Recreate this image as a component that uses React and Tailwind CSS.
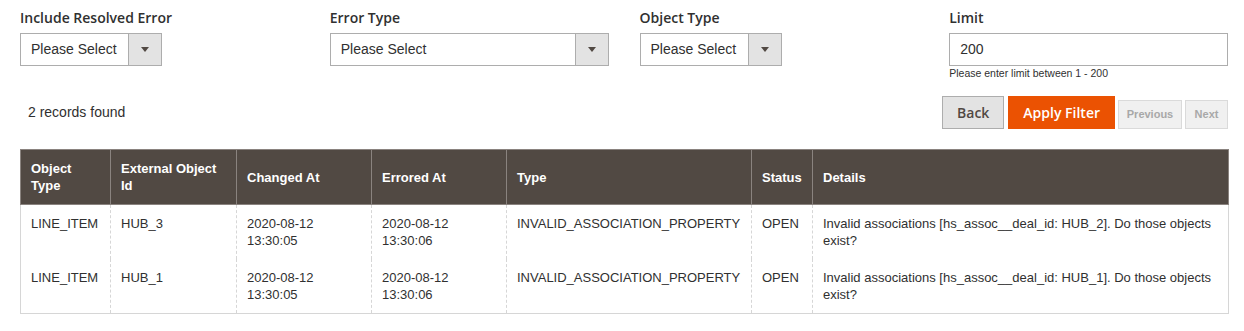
import React from "react";

const rows = [
  {
    objectType: "LINE_ITEM",
    externalId: "HUB_3",
    changedAt: ["2020-08-12", "13:30:05"],
    erroredAt: ["2020-08-12", "13:30:06"],
    type: "INVALID_ASSOCIATION_PROPERTY",
    status: "OPEN",
    details: "Invalid associations [hs_assoc__deal_id: HUB_2]. Do those objects exist?",
  },
  {
    objectType: "LINE_ITEM",
    externalId: "HUB_1",
    changedAt: ["2020-08-12", "13:30:05"],
    erroredAt: ["2020-08-12", "13:30:06"],
    type: "INVALID_ASSOCIATION_PROPERTY",
    status: "OPEN",
    details: "Invalid associations [hs_assoc__deal_id: HUB_1]. Do those objects exist?",
  },
];

const columns = [
  { label: ["Object", "Type"], width: "w-[90px]" },
  { label: ["External Object", "Id"], width: "w-[126px]" },
  { label: ["Changed At"], width: "w-[135px]" },
  { label: ["Errored At"], width: "w-[135px]" },
  { label: ["Type"], width: "w-[245px]" },
  { label: ["Status"], width: "w-[61px]" },
  { label: ["Details"], width: "w-[416px]" },
];

const FieldLabel = ({ children }) => (
  <div className="font-['Open_Sans',sans-serif] font-semibold text-[14px] leading-[20px] text-[#303030] mb-[5px]">
    {children}
  </div>
);

const Select = ({ width }) => (
  <div
    className={`${width} h-[33px] flex border border-[#adadad] bg-white font-['Liberation_Sans',Arial,sans-serif] text-[14px] text-[#303030]`}
  >
    <div className="flex-1 flex items-center pl-[10px]">Please Select</div>
    <div className="w-[33px] flex items-center justify-center bg-[#e3e3e3] border-l border-[#adadad]">
      <svg width="8" height="5" viewBox="0 0 8 5">
        <path d="M0 0h8L4 5z" fill="#514943" />
      </svg>
    </div>
  </div>
);

export default function App() {
  return (
    <div className="w-[1244px] h-[331px] bg-white pl-[20px] pr-[16px] pt-[8px] font-['Liberation_Sans',Arial,sans-serif] text-[#303030]">
      {/* Filters */}
      <div className="grid grid-cols-4 gap-x-[31px]">
        <div>
          <FieldLabel>Include Resolved Error</FieldLabel>
          <Select width="w-[142px]" />
        </div>
        <div>
          <FieldLabel>Error Type</FieldLabel>
          <Select width="w-[279px]" />
        </div>
        <div>
          <FieldLabel>Object Type</FieldLabel>
          <Select width="w-[142px]" />
        </div>
        <div>
          <FieldLabel>Limit</FieldLabel>
          <div className="h-[33px] w-full flex items-center border border-[#adadad] pl-[10px] text-[14px]">
            200
          </div>
          <div className="text-[10.5px] leading-[13px] mt-[1px] text-[#303030]">
            Please enter limit between 1 - 200
          </div>
        </div>
      </div>

      {/* Toolbar */}
      <div className="mt-[16px] flex items-center justify-between">
        <div className="pl-[8px] text-[14px]">2 records found</div>
        <div className="flex items-end gap-[3px]">
          <button className="h-[33px] px-[14px] bg-[#e3e3e3] border border-[#adadad] text-[#514943] font-['Open_Sans',sans-serif] font-semibold text-[14px] mr-[1px]">
            Back
          </button>
          <button className="h-[33px] px-[14px] bg-[#eb5202] border border-[#eb5202] text-white font-['Open_Sans',sans-serif] font-semibold text-[14px]">
            Apply Filter
          </button>
          <button className="h-[29px] w-[64px] bg-[#f0f0f0] border border-[#dadada] text-[#a8a8a8] font-bold text-[11px]">
            Previous
          </button>
          <button className="h-[29px] w-[43px] bg-[#f0f0f0] border border-[#dadada] text-[#a8a8a8] font-bold text-[11px]">
            Next
          </button>
        </div>
      </div>

      {/* Grid */}
      <table className="mt-[20px] w-[1208px] table-fixed border-collapse border border-[#d6d6d6] text-[13px] leading-[17px]">
        <thead>
          <tr className="bg-[#514943]">
            {columns.map((c, i) => (
              <th
                key={i}
                className={`${c.width} h-[55px] px-[10px] py-[10px] text-left align-middle font-bold text-white border border-[#8a837f]`}
              >
                {c.label.map((l, j) => (
                  <div key={j}>{l}</div>
                ))}
              </th>
            ))}
          </tr>
        </thead>
        <tbody>
          {rows.map((r, i) => (
            <tr key={i}>
              <td className="px-[10px] pt-[10px] pb-[10px] align-top border-x border-dashed border-[#d6d6d6]">
                {r.objectType}
              </td>
              <td className="px-[10px] pt-[10px] pb-[10px] align-top border-x border-dashed border-[#d6d6d6]">
                {r.externalId}
              </td>
              <td className="px-[10px] pt-[10px] pb-[10px] align-top border-x border-dashed border-[#d6d6d6]">
                <div>{r.changedAt[0]}</div>
                <div>{r.changedAt[1]}</div>
              </td>
              <td className="px-[10px] pt-[10px] pb-[10px] align-top border-x border-dashed border-[#d6d6d6]">
                <div>{r.erroredAt[0]}</div>
                <div>{r.erroredAt[1]}</div>
              </td>
              <td className="px-[10px] pt-[10px] pb-[10px] align-top border-x border-dashed border-[#d6d6d6]">
                {r.type}
              </td>
              <td className="px-[10px] pt-[10px] pb-[10px] align-top border-x border-dashed border-[#d6d6d6]">
                {r.status}
              </td>
              <td className="px-[10px] pt-[10px] pb-[10px] align-top border-x border-dashed border-[#d6d6d6]">
                {r.details}
              </td>
            </tr>
          ))}
        </tbody>
      </table>
    </div>
  );
}
